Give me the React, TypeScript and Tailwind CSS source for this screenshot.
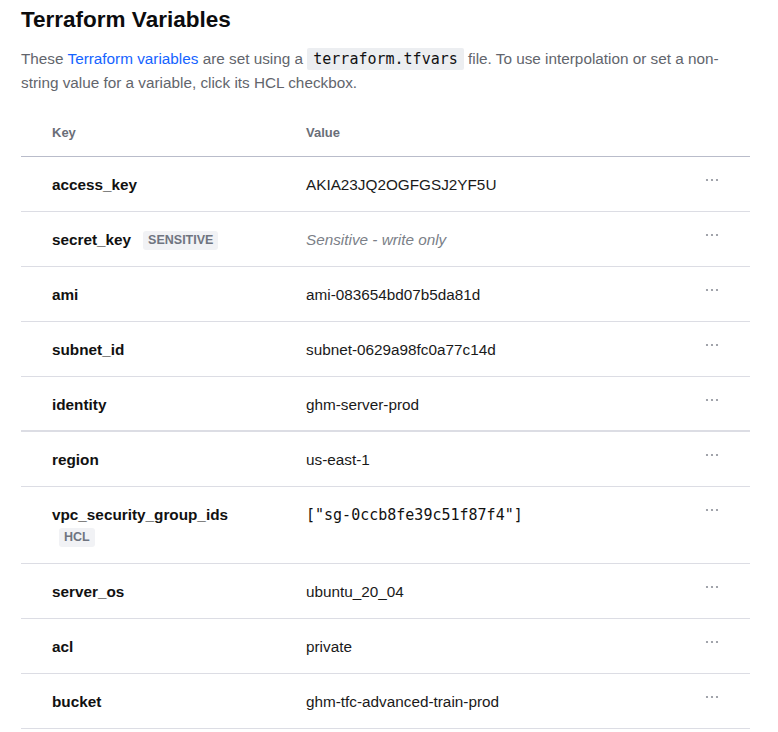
type Variable = {
  name: string;
  value: string;
  sensitive?: boolean;
  hcl?: boolean;
  groupEnd?: boolean;
};

const variables: Variable[] = [
  { name: "access_key", value: "AKIA23JQ2OGFGSJ2YF5U" },
  { name: "secret_key", value: "Sensitive - write only", sensitive: true },
  { name: "ami", value: "ami-083654bd07b5da81d" },
  { name: "subnet_id", value: "subnet-0629a98fc0a77c14d" },
  { name: "identity", value: "ghm-server-prod", groupEnd: true },
  { name: "region", value: "us-east-1" },
  { name: "vpc_security_group_ids", value: '["sg-0ccb8fe39c51f87f4"]', hcl: true },
  { name: "server_os", value: "ubuntu_20_04" },
  { name: "acl", value: "private" },
  { name: "bucket", value: "ghm-tfc-advanced-train-prod" },
];

function Ellipsis() {
  return (
    <svg width="14" height="4" viewBox="0 0 14 4" className="mt-[3px]">
      <circle cx="2" cy="2" r="1.1" fill="#8b8f98" />
      <circle cx="7" cy="2" r="1.1" fill="#8b8f98" />
      <circle cx="12" cy="2" r="1.1" fill="#8b8f98" />
    </svg>
  );
}

function Badge({ children }: { children: React.ReactNode }) {
  return (
    <span className="inline-flex h-[19px] items-center rounded-[3px] bg-[#f1f2f5] px-[5px] text-[12.5px] leading-none font-bold text-[#6f7480]">
      {children}
    </span>
  );
}

function VariableRow({ v }: { v: Variable }) {
  return (
    <div
      className={
        v.groupEnd
          ? "grid grid-cols-[285px_1fr_45px] border-b-2 border-[#dcdde4] pt-[18px] pb-[15px] text-[15.3px] leading-5"
          : "grid grid-cols-[285px_1fr_45px] border-b border-[#dcdde4] pt-[18px] pb-[16px] text-[15.3px] leading-5"
      }
    >
      <div className="pl-[31px]">
        <div className="flex h-5 items-center gap-3">
          <span className="font-bold text-[#111]">{v.name}</span>
          {v.sensitive && <Badge>SENSITIVE</Badge>}
        </div>
        {v.hcl && (
          <div className="mt-[3px] ml-[7px] flex h-[19px]">
            <Badge>HCL</Badge>
          </div>
        )}
      </div>
      <div className="h-5">
        {v.sensitive ? (
          <span className="italic text-[#7b7f88]">{v.value}</span>
        ) : v.hcl ? (
          <span className="font-['DejaVu_Sans_Mono',monospace] text-[15px] text-[#111]">
            {v.value}
          </span>
        ) : (
          <span className="text-[#1a1a1a]">{v.value}</span>
        )}
      </div>
      <div className="flex h-5 items-start">
        <Ellipsis />
      </div>
    </div>
  );
}

export default function App() {
  return (
    <div className="min-h-screen bg-white px-[21px] pt-[6px] font-['Liberation_Sans',Arial,sans-serif]">
      <h1 className="text-[22.5px] font-bold leading-7 text-[#0c0c0e]">Terraform Variables</h1>
      <p className="mt-[13px] w-[729px] text-[15.3px] leading-6 text-[#62656c]">
        These <span className="text-[#1563ff]">Terraform variables</span> are set using a{" "}
        <code className="rounded-[2px] bg-[#eceef1] px-[6px] py-[2px] font-['DejaVu_Sans_Mono',monospace] text-[15px] text-[#111]">
          terraform.tfvars
        </code>{" "}
        file. To use interpolation or set a non-string value for a variable, click its HCL
        checkbox.
      </p>
      <div className="mt-4 w-[729px]">
        <div className="grid grid-cols-[285px_1fr_45px] border-b border-[#b9bcca] pt-3 pb-[13px] text-[13px] leading-5 font-bold text-[#6a6e78]">
          <div className="pl-[31px]">Key</div>
          <div>Value</div>
          <div />
        </div>
        {variables.map((v) => (
          <VariableRow key={v.name} v={v} />
        ))}
      </div>
    </div>
  );
}
